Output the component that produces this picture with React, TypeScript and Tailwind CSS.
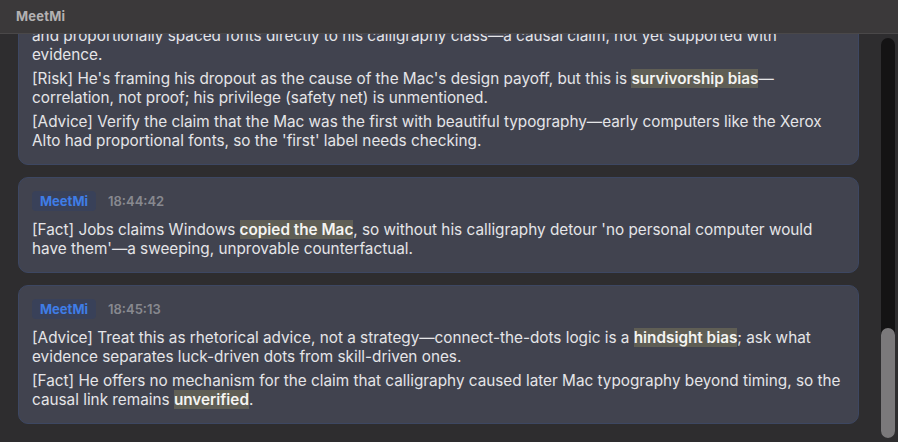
import React, { useEffect, useRef } from "react";

type Part = string | { hl: string } | { br: true };

type Message = {
  time: string;
  paragraphs: Part[][];
};

const messages: Message[] = [
  {
    time: "18:44:05",
    paragraphs: [
      [
        "[Fact] Jobs credits the Mac's beautiful typography, its multiple typefaces, serif lettering,",
        { br: true },
        "and proportionally spaced fonts directly to his calligraphy class—a causal claim, not yet supported with evidence.",
      ],
      [
        "[Risk] He's framing his dropout as the cause of the Mac's design payoff, but this is ",
        { hl: "survivorship bias" },
        "—correlation, not proof; his privilege (safety net) is unmentioned.",
      ],
      [
        "[Advice] Verify the claim that the Mac was the first with beautiful typography—early computers like the Xerox Alto had proportional fonts, so the 'first' label needs checking.",
      ],
    ],
  },
  {
    time: "18:44:42",
    paragraphs: [
      [
        "[Fact] Jobs claims Windows ",
        { hl: "copied the Mac" },
        ", so without his calligraphy detour 'no personal computer would have them'—a sweeping, unprovable counterfactual.",
      ],
    ],
  },
  {
    time: "18:45:13",
    paragraphs: [
      [
        "[Advice] Treat this as rhetorical advice, not a strategy—connect-the-dots logic is a ",
        { hl: "hindsight bias" },
        "; ask what evidence separates luck-driven dots from skill-driven ones.",
      ],
      [
        "[Fact] He offers no mechanism for the claim that calligraphy caused later Mac typography beyond timing, so the causal link remains ",
        { hl: "unverified" },
        ".",
      ],
    ],
  },
];

const renderPart = (part: Part, key: number) => {
  if (typeof part === "string") return <React.Fragment key={key}>{part}</React.Fragment>;
  if ("br" in part) return <br key={key} />;
  return (
    <span key={key} className="bg-[#5f5e55] font-semibold text-[#f4f4f2]">
      {part.hl}
    </span>
  );
};

const MessageCard = ({ msg }: { msg: Message }) => (
  <div className="rounded-[10px] border border-[#3d4762] bg-[#41434f] px-[13px] pt-[13px] pb-[13px]">
    <div className="flex items-center gap-3 mb-[9px]">
      <span className="h-5 px-[8px] rounded-[4px] bg-[#394159] text-[#3f7de6] text-[13px] font-bold leading-5">
        MeetMi
      </span>
      <span className="text-[13px] font-semibold text-[#88898f] leading-5">
        {msg.time}
      </span>
    </div>
    <div className="flex flex-col gap-1">
      {msg.paragraphs.map((p, i) => (
        <p key={i} className="text-[15.3px] leading-[19.5px] text-[#e5e5e8]">
          {p.map(renderPart)}
        </p>
      ))}
    </div>
  </div>
);

const App = () => {
  const listRef = useRef<HTMLDivElement>(null);

  useEffect(() => {
    if (listRef.current) {
      listRef.current.scrollTop = listRef.current.scrollHeight;
    }
  }, []);

  return (
    <div
      className="flex flex-col h-[442px] w-full bg-[#2e2d2f] overflow-hidden"
      style={{ fontFamily: "Inter, 'Noto Sans', sans-serif" }}
    >
      {/* Title bar */}
      <div className="h-[34px] shrink-0 flex items-center px-4 bg-[#3b393a] border-b border-[#4a4849]">
        <span className="text-[13px] font-bold text-[#b3b1b2] tracking-[0.2px]">
          MeetMi
        </span>
      </div>

      <div className="flex-1 flex min-h-0">
        <div
          ref={listRef}
          className="flex-1 overflow-y-auto [scrollbar-width:none] pl-[18px] pr-[22px] pb-[18px]"
        >
          <div className="flex flex-col gap-3 pt-3">
            {messages.map((m) => (
              <MessageCard key={m.time} msg={m} />
            ))}
          </div>
        </div>

        {/* scrollbar */}
        <div className="w-[14px] mr-[3px] mt-1 mb-1 rounded-full bg-[#141314] flex flex-col">
          <div className="mt-auto h-[110px] rounded-full bg-[#7b797b]" />
        </div>
      </div>
    </div>
  );
};

export default App;
